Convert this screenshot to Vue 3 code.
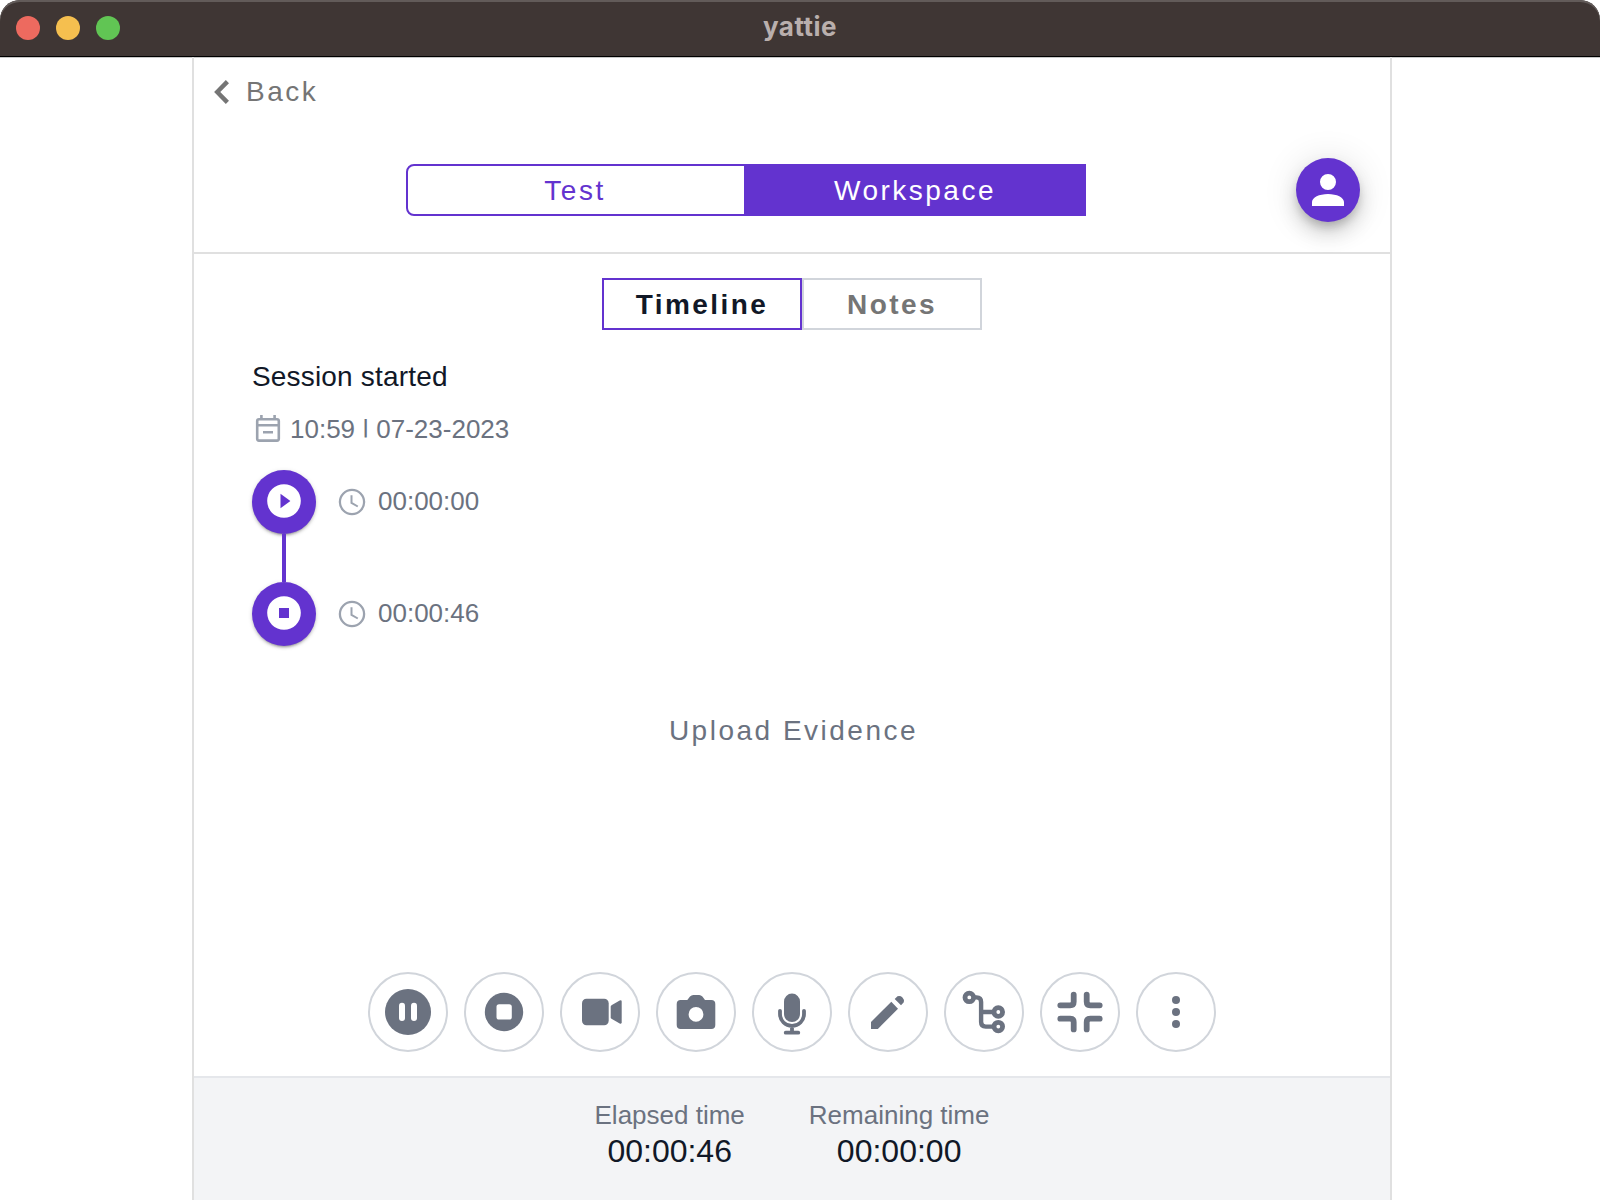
<script setup>
const events = [
  { kind: 'play', time: '00:00:00' },
  { kind: 'stop', time: '00:00:46' },
]

const tools = ['pause', 'stop', 'video', 'camera', 'mic', 'pencil', 'tree', 'compress', 'more']

const timers = [
  { label: 'Elapsed time', value: '00:00:46' },
  { label: 'Remaining time', value: '00:00:00' },
]
</script>

<template>
  <div class="window">
    <header class="titlebar">
      <div class="lights">
        <span class="light red"></span>
        <span class="light yellow"></span>
        <span class="light green"></span>
      </div>
      <div class="title">yattie</div>
    </header>

    <main class="panel">
      <button class="back">
        <svg width="16" height="24" viewBox="0 0 16 24">
          <path d="M13.4 1.6 3.2 12l10.200 10.400" fill="none" stroke="currentColor" stroke-width="4.400" />
        </svg>
        <span>Back</span>
      </button>

      <div class="top">
        <div class="switch">
          <button class="seg">Test</button>
          <button class="seg on">Workspace</button>
        </div>
        <button class="avatar">
          <svg width="48" height="48" viewBox="0 0 24 24" fill="#fff">
            <path d="M12 4a4 4 0 1 1 0 8 4 4 0 0 1 0-8zm0 10c4.42 0 8 1.79 8 4v2H4v-2c0-2.21 3.58-4 8-4z" />
          </svg>
        </button>
      </div>

      <div class="tabs">
        <button class="tab active">Timeline</button>
        <button class="tab notes">Notes</button>
      </div>

      <section class="timeline">
        <h2>Session started</h2>
        <div class="date">
          <svg width="32" height="32" viewBox="0 0 32 32" fill="none" stroke="#9ca3af" stroke-width="2.6">
            <rect x="5.200" y="6.200" width="21.600" height="21.400" rx="1.800" />
            <path d="M5 12.200h22M9.400 2v4M22.600 2v4M11 19.300h10" />
          </svg>
          <span>10:59 <span class="bar">|</span> 07-23-2023</span>
        </div>
        <div v-for="e in events" :key="e.kind" class="event">
          <div class="dot">
            <svg width="64" height="64" viewBox="0 0 64 64">
              <circle cx="32" cy="31" r="16.800" fill="#fff" />
              <path v-if="e.kind === 'play'" d="M28.500 23.700 38.400 31l-9.900 7.300z" fill="#6333cf" />
              <rect v-else x="27" y="26" width="10" height="10" fill="#6333cf" />
            </svg>
          </div>
          <svg class="clock" width="28" height="28" viewBox="0 0 28 28" fill="none" stroke="#9ca3af">
            <circle cx="14" cy="14" r="12.100" stroke-width="2.300" />
            <path d="M13.500 7.300v7.600l6.300 3.600" stroke-width="2" />
          </svg>
          <span class="time">{{ e.time }}</span>
        </div>
      </section>

      <div class="upload">Upload Evidence</div>

      <nav class="tools">
        <button v-for="t in tools" :key="t" class="tool">
          <svg width="76" height="76" viewBox="2 2 76 76" fill="#6b7280">
            <template v-if="t === 'pause'">
              <circle cx="40" cy="40" r="23" />
              <rect x="31" y="30.800" width="6" height="18.200" rx="3" fill="#fff" />
              <rect x="43" y="30.800" width="6" height="18.200" rx="3" fill="#fff" />
            </template>
            <template v-else-if="t === 'stop'">
              <circle cx="40" cy="40" r="19.200" />
              <rect x="32.500" y="32.200" width="15.300" height="15.300" rx="2.600" fill="#fff" />
            </template>
            <template v-else-if="t === 'video'">
              <rect x="22" y="26.700" width="26.700" height="26.600" rx="4.500" />
              <path d="M50.700 34.800q0-1 .8-1.600l8.200-4.600q2-.9 2 1.200v20.400q0 2.100-2 1.200l-8.200-4.600q-.8-.6-.8-1.600z" />
            </template>
            <path
              v-else-if="t === 'camera'"
              fill-rule="evenodd"
              d="M24.700 27.900H31.300L34 24.600Q35.400 23 37.300 23H43.200Q45 23 46.400 24.600L49 27.900H55.300Q59.300 27.900 59.300 31.900V53Q59.300 57 55.300 57H24.700Q20.700 57 20.700 53V31.900Q20.700 27.900 24.700 27.900ZM40 34.900a7.400 7.400 0 1 0 0 14.800 7.400 7.400 0 0 0 0-14.800Z"
            />
            <template v-else-if="t === 'mic'">
              <rect x="32" y="21.600" width="16" height="28.400" rx="8" />
              <path
                d="M28 38.800v3.200a12 12 0 0 0 24 0v-3.200M40 54v6M33.700 60.700h12.600"
                fill="none" stroke="#6b7280" stroke-width="3.800" stroke-linecap="round"
              />
            </template>
            <template v-else-if="t === 'pencil'">
              <path d="M23 50v7h6.800L50 36.700 43.300 29.800z" />
              <path d="M46.700 26.900 49.500 24.200A5 5 0 0 1 55.800 30.300L53 33.200z" />
            </template>
            <g v-else-if="t === 'tree'" fill="none" stroke="#6b7280" stroke-width="4.800">
              <circle cx="25.300" cy="25.400" r="4.300" />
              <circle cx="54.300" cy="40" r="4.300" />
              <circle cx="54.300" cy="54.600" r="4.300" />
              <path d="M29 25.400h3.500Q37.100 25.400 37.100 30v20q0 4.600 4.600 4.600H50M37 40h13" stroke-width="4.400" />
            </g>
            <path
              v-else-if="t === 'compress'"
              fill="none" stroke="#6b7280" stroke-width="5.800" stroke-linecap="round"
              d="M33.700 22.600V29.800Q33.700 33.300 30.100 33.300H20.300M46.700 22.600V29.800Q46.700 33.300 50.300 33.300H59.700M20.300 46.700H30.100Q33.700 46.700 33.700 50.200V57.400M59.700 46.700H50.300Q46.700 46.700 46.700 50.200V57.400"
            />
            <template v-else>
              <circle cx="40" cy="28" r="4" />
              <circle cx="40" cy="40" r="4" />
              <circle cx="40" cy="52" r="4" />
            </template>
          </svg>
        </button>
      </nav>

      <footer class="footer">
        <div v-for="t in timers" :key="t.label" class="timer">
          <div class="label">{{ t.label }}</div>
          <div class="value">{{ t.value }}</div>
        </div>
      </footer>
    </main>
  </div>
</template>

<style>
body {
  margin: 0;
  background: #fff;
}
</style>

<style scoped>
* {
  box-sizing: border-box;
}
svg {
  display: block;
  flex: none;
}
button {
  font: inherit;
  color: inherit;
  background: none;
  border: 0;
  padding: 0;
  margin: 0;
}
.window {
  width: 1600px;
  height: 1200px;
  display: flex;
  flex-direction: column;
  overflow: hidden;
  font-family: "Liberation Sans", Arial, sans-serif;
  font-size: 28px;
  color: #111827;
}
.titlebar {
  flex: none;
  height: 57px;
  display: grid;
  grid-template-columns: 1fr auto 1fr;
  background: #3f3634;
  border-bottom: 1px solid #000;
  border-radius: 20px 20px 0 0;
  box-shadow: inset 0 2px 0 #625b59, 0 1px 0 #c8c8c8;
}
.lights {
  display: flex;
  gap: 16px;
  padding: 16px;
}
.light {
  width: 24px;
  height: 24px;
  border-radius: 50%;
}
.red { background: #ed6a5f; }
.yellow { background: #f5bf4f; }
.green { background: #61c554; }
.title {
  font: 700 26px/54px Inter, sans-serif;
  letter-spacing: 0.5px;
  color: #b9afad;
}
.panel {
  flex: 1;
  min-height: 0;
  width: 1200px;
  margin-left: 192px;
  display: flex;
  flex-direction: column;
  border: solid #e0e0e0;
  border-width: 0 2px;
}
.back {
  flex: none;
  height: 69px;
  margin-bottom: 2px;
  display: flex;
  align-items: center;
  align-self: flex-start;
  padding-left: 20px;
  gap: 16px;
  color: #757575;
  letter-spacing: 2.5px;
}
.top {
  flex: none;
  height: 126px;
  display: flex;
  align-items: center;
  justify-content: space-between;
  padding: 0 30px 0 212px;
  border-bottom: 2px solid #e0e0e0;
}
.switch {
  display: flex;
}
.seg {
  width: 340px;
  height: 52px;
  padding: 2px 2px 0 0;
  border: 2px solid #6333cf;
  border-radius: 8px 0 0 8px;
  color: #6333cf;
  letter-spacing: 2.5px;
}
.seg.on {
  border-radius: 0;
  background: #6333cf;
  color: #fff;
}
.avatar {
  width: 64px;
  height: 64px;
  padding: 8px;
  border-radius: 50%;
  background: #6333cf;
  box-shadow: 0 6px 10px -2px rgba(0, 0, 0, 0.2), 0 12px 20px rgba(0, 0, 0, 0.14),
    0 2px 36px rgba(0, 0, 0, 0.12);
}
.tabs {
  flex: none;
  display: flex;
  justify-content: center;
  margin-top: 24px;
}
.tab {
  height: 52px;
  padding-top: 2px;
  font-weight: 700;
  letter-spacing: 2.4px;
  border: 2px solid #d1d5db;
}
.tab.active {
  width: 200px;
  border-color: #6333cf;
}
.tab.notes {
  width: 180px;
  color: #757575;
}
.timeline {
  flex: none;
  padding: 27px 58px 0;
  color: #6b7280;
  font-size: 26px;
}
h2 {
  margin: 0;
  font-size: 28px;
  font-weight: 400;
  line-height: 40px;
  letter-spacing: 0.18px;
  color: #111827;
}
.date {
  display: flex;
  align-items: center;
  gap: 6px;
  height: 40px;
  margin: 12px 0 21px;
}
.bar {
  display: inline-block;
  clip-path: inset(0 0 7px);
}
.event {
  display: flex;
  align-items: center;
}
.event + .event {
  margin-top: 48px;
}
.dot {
  position: relative;
  width: 64px;
  height: 64px;
  border-radius: 50%;
  background: #6333cf;
  box-shadow: 0 3px 2px -2px rgba(0, 0, 0, 0.2), 0 2px 3px rgba(0, 0, 0, 0.14),
    0 1px 5px rgba(0, 0, 0, 0.12);
}
.event + .event .dot::before {
  content: "";
  position: absolute;
  left: 30px;
  bottom: 100%;
  width: 4px;
  height: 48px;
  background: #6333cf;
}
.clock {
  margin: 0 12px 0 22px;
}
.time {
  padding-bottom: 2px;
}
.upload {
  flex: none;
  margin-top: 69px;
  padding-left: 3px;
  text-align: center;
  line-height: 32px;
  letter-spacing: 2.5px;
  color: #6b7280;
}
.tools {
  display: flex;
  justify-content: center;
  gap: 16px;
  margin: auto 0 24px;
}
.tool {
  width: 80px;
  height: 80px;
  border: 2px solid #d1d5db;
  border-radius: 50%;
}
.footer {
  flex: none;
  height: 124px;
  display: flex;
  justify-content: center;
  gap: 64px;
  padding-top: 19px;
  background: #f3f4f6;
  border-top: 2px solid #e5e7eb;
  text-align: center;
}
.label {
  font-size: 26px;
  line-height: 36px;
  color: #6b7280;
}
.value {
  font-size: 32px;
  line-height: 36px;
}
</style>
